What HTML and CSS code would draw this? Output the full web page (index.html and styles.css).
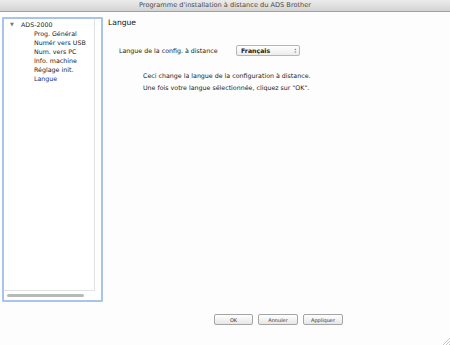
FILE: index.html
```html
<!DOCTYPE html>
<html lang="fr">
<head>
    <meta charset="UTF-8">
    <title>Programme d'installation à distance du ADS Brother</title>
    <link rel="stylesheet" href="styles.css">
</head>
<body>
    <div class="titlebar">Programme d'installation à distance du ADS Brother</div>
    <div class="main">
        <div class="sidebar">
            <div class="tree">
                <div class="node root"><span class="arrow">▼</span>ADS-2000</div>
                <div class="node">Prog. Général</div>
                <div class="node">Numér vers USB</div>
                <div class="node">Num. vers PC</div>
                <div class="node">Info. machine</div>
                <div class="node">Réglage init.</div>
                <div class="node selected">Langue</div>
            </div>
            <div class="hscroll"><div class="thumb"></div></div>
        </div>
        <div class="content">
            <div class="heading">Langue</div>
            <div class="row">
                <span class="label">Langue de la config. à distance</span>
                <div class="select">
                    <span>Français</span>
                    <span class="updown">▴<br>▾</span>
                </div>
            </div>
            <div class="note">
                <div>Ceci change la langue de la configuration à distance.</div>
                <div>Une fois votre langue sélectionnée, cliquez sur "OK".</div>
            </div>
        </div>
    </div>
    <div class="footer">
        <button class="btn">OK</button>
        <button class="btn">Annuler</button>
        <button class="btn">Appliquer</button>
    </div>
    <svg class="grip" width="8" height="8" viewBox="0 0 8 8">
        <line x1="1" y1="8" x2="8" y2="1" stroke="#b8b8b8" stroke-width="0.8"/>
        <line x1="4" y1="8" x2="8" y2="4" stroke="#b8b8b8" stroke-width="0.8"/>
        <line x1="7" y1="8" x2="8" y2="7" stroke="#b8b8b8" stroke-width="0.8"/>
    </svg>
</body>
</html>
```

FILE: styles.css
```css
html, body {
    margin: 0;
    padding: 0;
}
body {
    width: 450px;
    height: 345px;
    background-color: #fcfdfc;
    font-family: "DejaVu Sans", "Liberation Sans", sans-serif;
    font-size: 6.3px;
    color: #222;
    position: relative;
    overflow: hidden;
}
.titlebar {
    height: 11px;
    line-height: 11px;
    text-align: center;
    font-size: 6.6px;
    color: #4a4a4a;
    background: linear-gradient(#ececec, #d3d3d3);
    border-bottom: 1px solid #a0a0a0;
}
.main {
    display: flex;
    height: 285px;
    margin-top: 5px;
}
.sidebar {
    width: 97px;
    margin-left: 2px;
    border: 2px solid #a9c4ea;
    border-radius: 1px;
    background-color: #fff;
    display: flex;
    flex-direction: column;
}
.tree {
    flex: 1;
    margin-right: 6px;
    border-right: 1px solid #e2e2e2;
    border-bottom: 1px solid #e2e2e2;
    padding-top: 1px;
}
.node {
    height: 9px;
    line-height: 9px;
    padding-left: 30px;
    white-space: nowrap;
}
.node.root {
    padding-left: 6px;
}
.arrow {
    display: inline-block;
    width: 11px;
    font-size: 5px;
    color: #777;
    vertical-align: top;
}
.node.selected {
    color: #1c2a6a;
}
.hscroll {
    height: 9px;
    display: flex;
    align-items: center;
    padding-left: 3px;
}
.thumb {
    width: 77px;
    height: 3px;
    border-radius: 2px;
    background-color: #b9b9b9;
}
.content {
    flex: 1;
    padding-left: 5px;
}
.heading {
    font-size: 7.6px;
    line-height: 10px;
    margin-top: 1px;
    color: #111;
}
.row {
    display: flex;
    align-items: center;
    margin-top: 17px;
    padding-left: 11px;
}
.label {
    width: 117px;
}
.select {
    box-sizing: border-box;
    width: 64px;
    height: 11px;
    border: 1px solid #b6b6b6;
    border-radius: 2px;
    background: linear-gradient(#ffffff, #ececec);
    display: flex;
    align-items: center;
    justify-content: space-between;
    padding: 0 3px 0 4px;
    font-weight: bold;
    font-size: 6.2px;
}
.updown {
    font-size: 3px;
    line-height: 3px;
    color: #555;
}
.note {
    padding-left: 35px;
    margin-top: 14px;
}
.note div {
    height: 12px;
    line-height: 12px;
}
.footer {
    display: flex;
    gap: 5px;
    margin-top: 12px;
    padding-left: 214px;
}
.btn {
    height: 11px;
    width: 40px;
    padding: 0;
    border: 1px solid #a5a5a5;
    border-radius: 2px;
    background: linear-gradient(#ffffff, #e6e6e6);
    font-family: "DejaVu Sans", "Liberation Sans", sans-serif;
    font-size: 5px;
    color: #333;
}
.btn:first-child {
    width: 39px;
}
.grip {
    position: absolute;
    right: 0;
    bottom: 0;
}
```
